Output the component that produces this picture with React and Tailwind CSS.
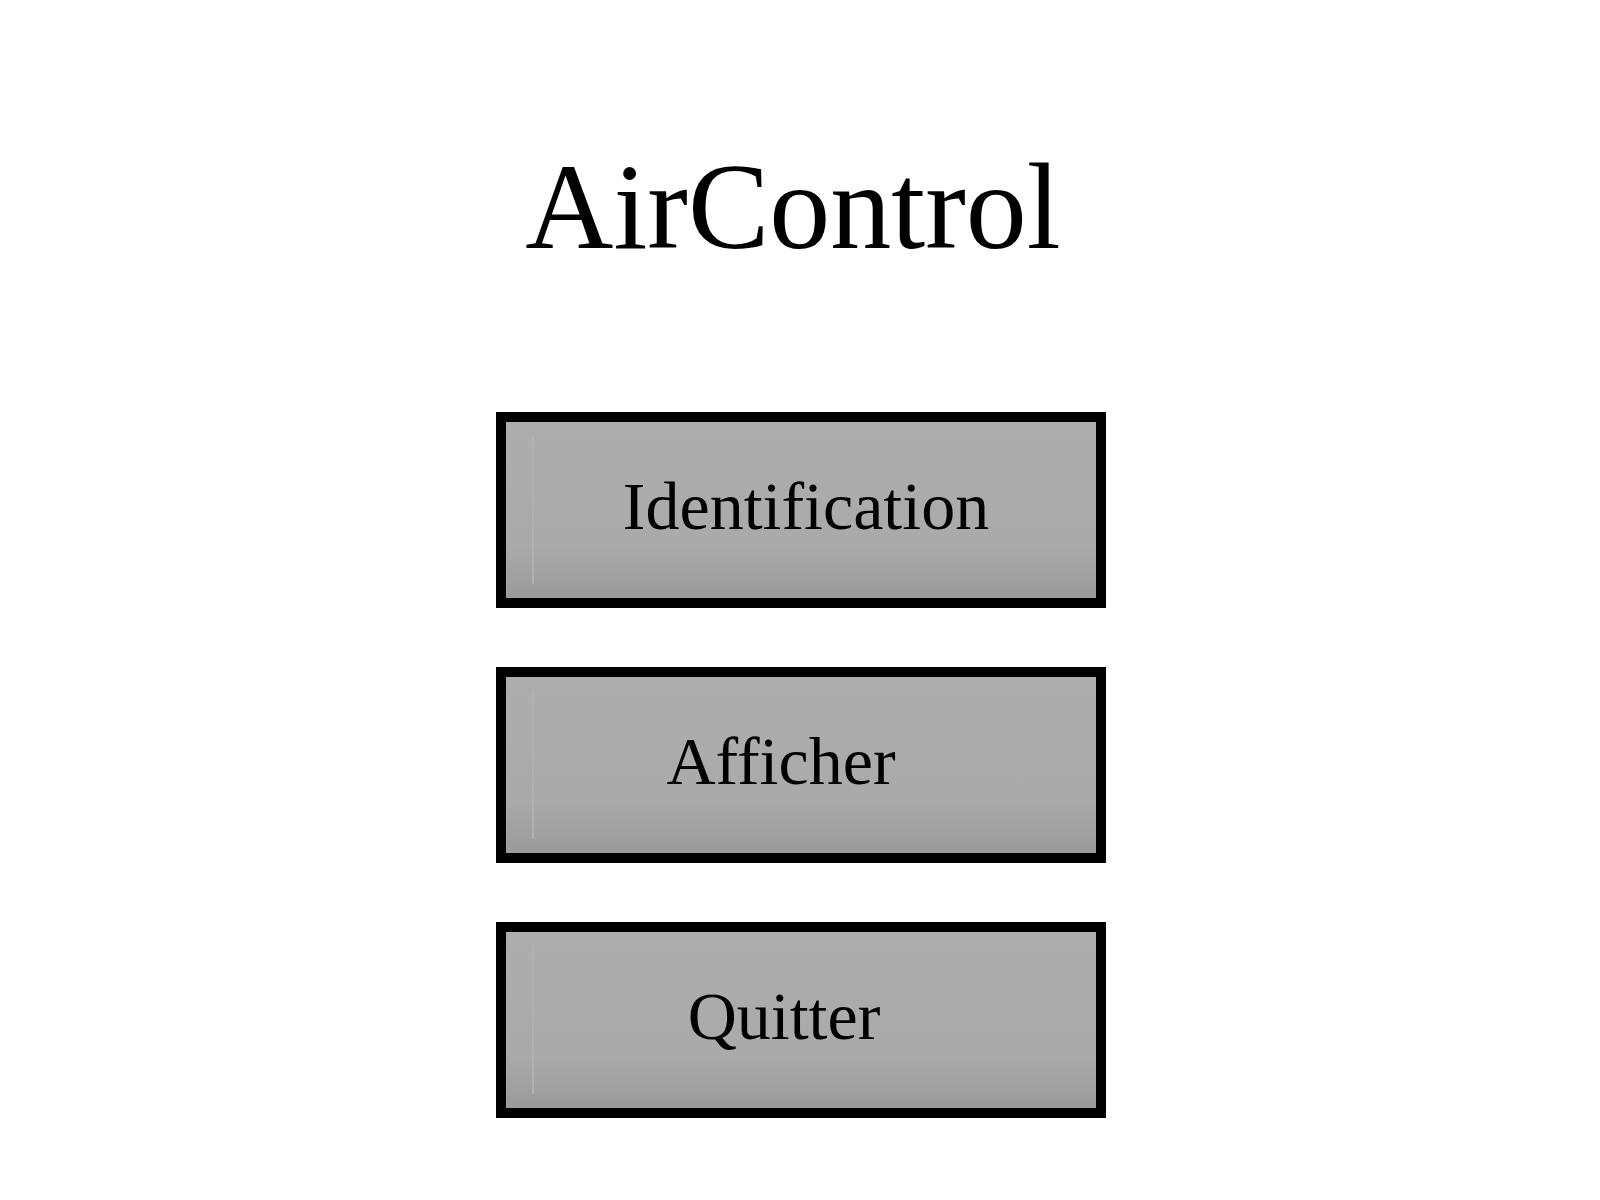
import React from 'react';

const buttons = [
    { label: 'Identification', shift: 'pl-[10px]' },
    { label: 'Afficher', shift: 'pr-[40px]' },
    { label: 'Quitter', shift: 'pr-[34px]' },
];

function MenuButton({ label, shift }) {
    return (
        <button
            type="button"
            className="relative w-[610px] h-[196px] border-[10px] border-black bg-gradient-to-b from-[#adadad] via-[#aaaaaa] via-70% to-[#9a9a9a] flex items-center justify-center cursor-pointer"
        >
            {/* liseré clair à gauche */}
            <span className="absolute left-[26px] top-[14px] bottom-[14px] w-[2px] bg-[#b1b1b1]" />
            <span className={`text-[68px] leading-none text-black pb-[8px] ${shift}`} style={{ fontFamily: '"Liberation Serif", "Times New Roman", serif' }}>
                {label}
            </span>
        </button>
    );
}

export default function App() {
    return (
        <div className="min-h-screen w-full bg-white flex flex-col items-center pt-[146px]" style={{ fontFamily: '"Liberation Serif", "Times New Roman", serif' }}>
            <h1 className="text-[122px] leading-none text-black font-normal ml-[-14px]">AirControl</h1>

            <div className="mt-[144px] flex flex-col gap-[59px] ml-[2px]">
                {buttons.map((b) => (
                    <MenuButton key={b.label} label={b.label} shift={b.shift} />
                ))}
            </div>
        </div>
    );
}
